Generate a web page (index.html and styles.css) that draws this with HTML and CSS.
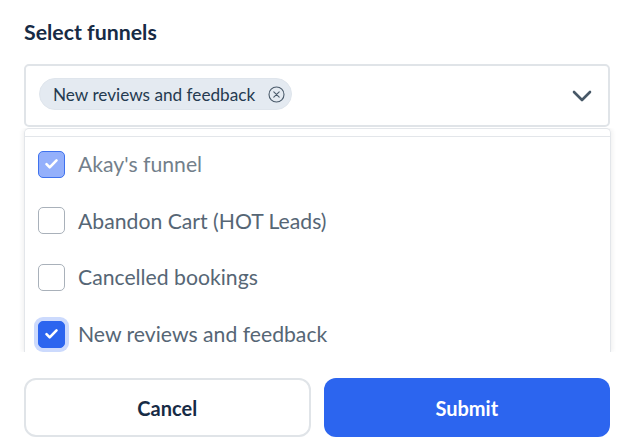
FILE: index.html
```html
<!DOCTYPE html>
<html lang="en">
<head>
  <meta charset="UTF-8">
  <meta name="viewport" content="width=device-width, initial-scale=1.0">
  <title>Select funnels</title>
  <link rel="stylesheet" href="styles.css">
</head>
<body>

  <div class="funnel-form">
    <h2>Select funnels</h2>

    <!-- Select box -->
    <div class="select-box">
      <span class="chip">
        New reviews and feedback
        <svg class="chip-close" width="17" height="17" viewBox="0 0 17 17" fill="none" stroke="#4b5b6b" stroke-width="1.1" stroke-linecap="round">
          <circle cx="8.5" cy="8.5" r="7.5"/>
          <path d="M5.8 5.8l5.4 5.4M11.2 5.8l-5.4 5.4"/>
        </svg>
      </span>
      <svg class="chevron" width="20" height="12" viewBox="0 0 20 12" fill="none" stroke="#475867" stroke-width="2.6" stroke-linecap="round" stroke-linejoin="round">
        <path d="M2 2l8 8 8-8"/>
      </svg>
    </div>

    <!-- Dropdown list -->
    <div class="dropdown">
      <div class="dropdown-inner">
        <div class="option option-disabled">
          <span class="check check-disabled">
            <svg width="15" height="12" viewBox="0 0 15 12" fill="none" stroke="#fff" stroke-width="2.6" stroke-linecap="round" stroke-linejoin="round"><path d="M2.5 6.2l3.2 3.2 6.8-7"/></svg>
          </span>
          Akay's funnel
        </div>
        <div class="option"><span class="check"></span>Abandon Cart (HOT Leads)</div>
        <div class="option"><span class="check"></span>Cancelled bookings</div>
        <div class="option">
          <span class="check check-on">
            <svg width="15" height="12" viewBox="0 0 15 12" fill="none" stroke="#fff" stroke-width="2.6" stroke-linecap="round" stroke-linejoin="round"><path d="M2.5 6.2l3.2 3.2 6.8-7"/></svg>
          </span>
          New reviews and feedback
        </div>
      </div>
    </div>

    <div class="actions">
      <button class="btn btn-cancel">Cancel</button>
      <button class="btn btn-submit">Submit</button>
    </div>
  </div>

</body>
</html>
```

FILE: styles.css
```css
body {
  font-family: Lato, sans-serif;
  margin: 0;
  background-color: white;
}

.funnel-form {
  padding: 20px 28px 0 24px;
}

h2 {
  margin: 0 0 20px;
  font-size: 21.3px;
  line-height: 24px;
  font-weight: 700;
  color: #172b45;
}

.select-box {
  display: flex;
  align-items: center;
  justify-content: space-between;
  box-sizing: border-box;
  height: 63px;
  padding: 0 16px 3px 13px;
  border: 2px solid #e0e4e8;
  border-radius: 5px;
}

.chip {
  display: flex;
  align-items: center;
  gap: 13px;
  box-sizing: border-box;
  height: 32px;
  padding: 0 6px 0 13px;
  background-color: #e4eaf1;
  border: 1px solid #dfe5ec;
  border-radius: 16px;
  font-size: 17.2px;
  color: #243a50;
}

.chevron {
  margin-top: 3px;
}

.dropdown {
  box-sizing: border-box;
  height: 224px;
  margin-top: 1px;
  margin-right: -1px;
  padding-top: 7px;
  border: 1px solid #e3e6ea;
  border-bottom: none;
  border-radius: 5px 5px 0 0;
  overflow: hidden;
  box-shadow: -2px 0 4px rgba(0, 0, 0, 0.05), 2px 0 4px rgba(0, 0, 0, 0.05);
  clip-path: inset(0 -6px 0 -6px);
}

.dropdown-inner {
  border-top: 1px solid #e3e6ea;
}

.option {
  display: flex;
  align-items: center;
  gap: 13px;
  box-sizing: border-box;
  height: 56.6px;
  padding: 0 0 2px 13px;
  font-size: 21.2px;
  color: #566675;
}

.option-disabled {
  color: #737f8b;
}

.check {
  display: flex;
  align-items: center;
  justify-content: center;
  box-sizing: border-box;
  width: 27px;
  height: 27px;
  flex-shrink: 0;
  border: 1px solid #a9b1ba;
  border-radius: 5px;
  background-color: white;
}

.check-disabled {
  background-color: #94b0fb;
  border-color: #3f72ee;
}

.check-on {
  background-color: #2c65ef;
  border-color: #2c65ef;
  box-shadow: 0 0 0 4px #ccdafd;
}

.actions {
  display: grid;
  grid-template-columns: 1fr 1fr;
  gap: 13px;
  margin-top: 26px;
}

.btn {
  height: 59px;
  border-radius: 12px;
  font-family: Lato, sans-serif;
  font-size: 20px;
  font-weight: 700;
  cursor: pointer;
}

.btn-cancel {
  background-color: white;
  border: 2px solid #e0e4e8;
  color: #172b45;
}

.btn-submit {
  background-color: #2c65ef;
  border: none;
  color: white;
}
```
